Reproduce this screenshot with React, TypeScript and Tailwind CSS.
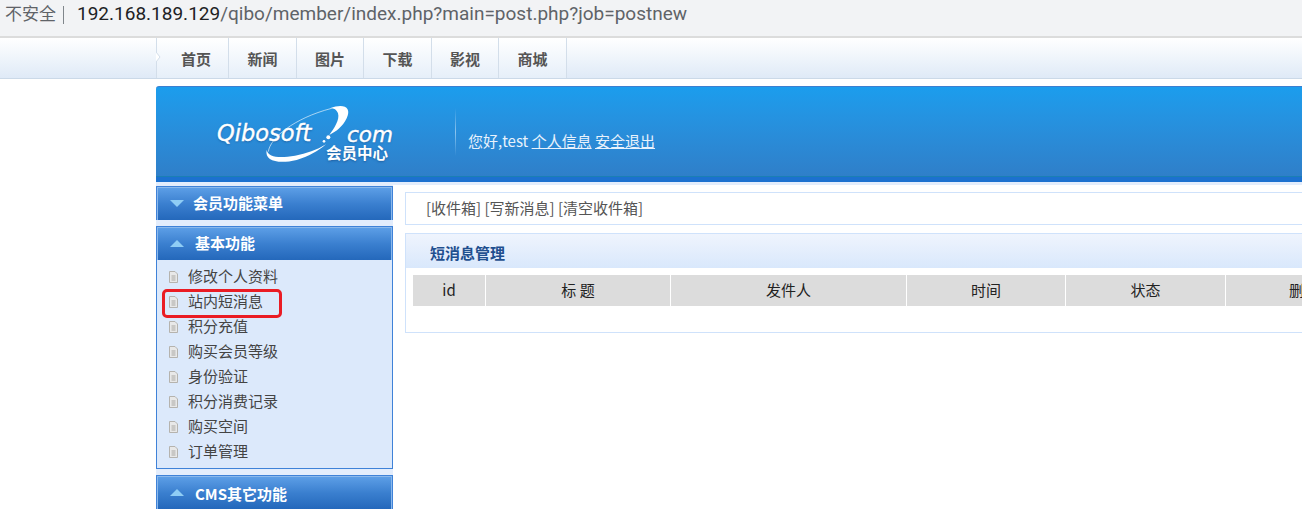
import React from 'react';

const navItems = [
  { label: '首页', width: 'w-[72px] pl-[7px]' },
  { label: '新闻', width: 'w-[68px]' },
  { label: '图片', width: 'w-[67px]' },
  { label: '下载', width: 'w-[68px]' },
  { label: '影视', width: 'w-[67px]' },
  { label: '商城', width: 'w-[68px]' },
];

const menuItems = ['修改个人资料', '站内短消息', '积分充值', '购买会员等级', '身份验证', '积分消费记录', '购买空间', '订单管理'];

const columns = [
  { label: 'id', width: 'w-[72px]' },
  { label: '标 题', width: 'w-[184px]' },
  { label: '发件人', width: 'w-[235px]' },
  { label: '时间', width: 'w-[158px]' },
  { label: '状态', width: 'w-[159px]' },
  { label: '删除', width: 'w-[156px]' },
];

const DocIcon = () => (
  <svg width="9" height="12" viewBox="0 0 9 12" className="shrink-0">
    <path d="M0.5 0.5H6L8.5 3V11.5H0.5Z" fill="#e8e8e8" stroke="#b5b3ae" />
    <path d="M2.5 5H6.5M2.5 7H6.5M2.5 9H6.5" stroke="#a9a7a2" />
  </svg>
);

const Arrow = ({ up }: { up?: boolean }) => (
  <svg width="14" height="7" viewBox="0 0 14 7" className="shrink-0">
    <path d={up ? 'M7 0L14 7H0Z' : 'M0 0H14L7 7Z'} fill="#8fcdf5" />
  </svg>
);

const MenuHead = ({ title, up, textLeft }: { title: string; up?: boolean; textLeft: string }) => (
  <div className="h-[34px] border-x border-t border-[#3f82d8]">
    <div className="flex h-[33px] items-center border-x border-t border-[#8ab8ec] bg-gradient-to-b from-[#5c9ee6] via-[#3a7fcf] to-[#2468bb] pb-px pl-[12px]">
      <Arrow up={up} />
      <span className={`${textLeft} text-[15px] font-bold text-white`}>{title}</span>
    </div>
  </div>
);

const Logo = () => (
  <div className="relative ml-[60px] h-[66px] w-[180px] text-white [text-shadow:0_1px_2px_rgba(20,70,130,0.6)]">
    {/* swoosh, drawn in 3x coordinates of the crop */}
    <svg width="210" height="75" viewBox="0 0 630 225" className="absolute left-[-16px] top-[-4px]">
      <path d="M205 170C210 130 280 70 395 40" fill="none" stroke="#ffffff" strokeOpacity="0.6" strokeWidth="3" />
      <path d="M390 40C432 24 456 38 440 70C428 95 408 110 388 120C402 100 420 75 414 55C410 44 402 40 390 40Z" fill="#ffffff" />
      <path d="M200 165C193 198 235 208 290 195C325 185 355 168 378 148C350 165 320 176 285 182C240 190 205 188 200 165Z" fill="#ffffff" />
      <circle cx="385" cy="127" r="6" fill="#ffffff" />
      <circle cx="372" cy="139" r="4" fill="#ffffff" />
    </svg>
    <span className="absolute left-[1px] top-[26px] font-['DejaVu_Sans',sans-serif] text-[22.5px] leading-[16px] italic [-webkit-text-stroke:0.4px_white]">Qibosoft</span>
    <span className="absolute left-[131px] top-[28px] font-['DejaVu_Sans',sans-serif] text-[21.5px] leading-[16px] italic [-webkit-text-stroke:0.4px_white]">com</span>
    <span className="absolute left-[110px] top-[46px] text-[15.5px] leading-none font-bold">会员中心</span>
  </div>
);

export default function App() {
  return (
    <div className="relative h-[509px] w-[1302px] overflow-hidden bg-white font-['Noto_Sans_CJK_SC',sans-serif] text-[15px]">
      {/* Address bar */}
      <div className="flex h-[36px] items-center bg-[#f2f3f5] pb-[7px] pl-[5px] font-['Roboto','Noto_Sans_CJK_SC',sans-serif] text-[#5f6368]">
        <span className="text-[17px]">不安全</span>
        <span className="ml-[7px] mr-[13px] h-[18px] w-px bg-[#80868b]" />
        <span className="text-[19px] whitespace-nowrap">
          <span className="text-[#202124]">192.168.189.129</span>/qibo/member/index.php?main=post.php?job=postnew
        </span>
      </div>

      {/* Nav */}
      <div className="flex h-[43px] border-t-2 border-b border-t-[#dcdcdc] border-b-[#cbd9e8] bg-gradient-to-b from-white to-[#dfeaf7] pl-[156px]">
        {navItems.map((item, i) => (
          <div
            key={item.label}
            className={`${item.width} relative flex items-center justify-center border-l border-[#d3deea] bg-gradient-to-b from-white to-[#e6eff9] pt-[2px] text-[15px] font-bold text-[#555555]`}
          >
            {i === 0 && (
              <svg width="5" height="10" viewBox="0 0 5 10" className="absolute left-[-1px] top-[14px]">
                <path d="M0 0L4 5L0 10" fill="#ffffff" stroke="#d3deea" />
              </svg>
            )}
            {item.label}
          </div>
        ))}
        <div className="w-px bg-[#d3deea]" />
      </div>

      {/* Banner */}
      <div className="ml-[156px] mt-[7px]">
        <div className="flex h-[91px] items-center rounded-tl-[3px] border-t border-b border-t-[#3b7fd0] border-b-[#1a7fb5] bg-gradient-to-b from-[#1b9ded] to-[#2f7fc9]">
          <Logo />
          <div className="ml-[59px] h-[48px] w-px bg-gradient-to-b from-transparent via-[#8cc4ee] to-transparent" />
          <div className="ml-[12px] mt-[20px] text-[15px] text-[#e8f2fc]">
            您好,test <span className="underline">个人信息</span> <span className="underline">安全退出</span>
          </div>
        </div>
        <div className="h-[5px] bg-[#1c71cf]" />
        <div className="h-[3px] bg-[#e3edfc]" />
      </div>

      <div className="ml-[156px] flex items-start">
        {/* Sidebar */}
        <div className="w-[237px] shrink-0 bg-[#e3edfc] pt-px">
          <MenuHead title="会员功能菜单" textLeft="ml-[9px]" />
          <div className="h-[6px]" />
          <div className="border border-t-0 border-[#3f82d8] bg-[#dce9fb]">
            <div className="-mx-px">
              <MenuHead title="基本功能" up textLeft="ml-[11px]" />
            </div>
            <div className="pb-[4px] pt-[4px]">
              {menuItems.map((item) => (
                <div key={item} className="flex h-[25px] items-center pl-[12px] text-[15px] text-[#444444]">
                  <DocIcon />
                  <span className="ml-[10px]">{item}</span>
                </div>
              ))}
            </div>
          </div>
          <div className="h-[6px]" />
          <MenuHead title="CMS其它功能" up textLeft="ml-[11px] mt-[3px]" />
        </div>

        {/* Main */}
        <div className="ml-[12px] w-[950px] shrink-0 pt-[7px]">
          <div className="flex h-[33px] items-center border border-r-0 border-[#cfe2fb] pl-[20px] text-[15px] text-[#555555]">
            [收件箱] [写新消息] [清空收件箱]
          </div>
          <div className="mt-[8px] h-[100px] border border-r-0 border-[#cfe2fb]">
            <div className="flex h-[34px] items-center bg-gradient-to-b from-[#eff4fd] to-[#d9e8fc] pl-[24px] pt-[5px] text-[15px] font-bold text-[#1f4f8f]">
              短消息管理
            </div>
            <div className="ml-[7px] mt-[7px] flex gap-px">
              {columns.map((col) => (
                <div
                  key={col.label}
                  className={`${col.width} flex h-[31px] shrink-0 items-center justify-center bg-[#dcdcdc] text-[15px] text-[#222222]`}
                >
                  {col.label}
                </div>
              ))}
            </div>
          </div>
        </div>
      </div>

      {/* Red annotation */}
      <div className="absolute left-[162px] top-[289px] h-[29px] w-[120px] rounded-[5px] border-[3px] border-[#ea1c24]" />
    </div>
  );
}
